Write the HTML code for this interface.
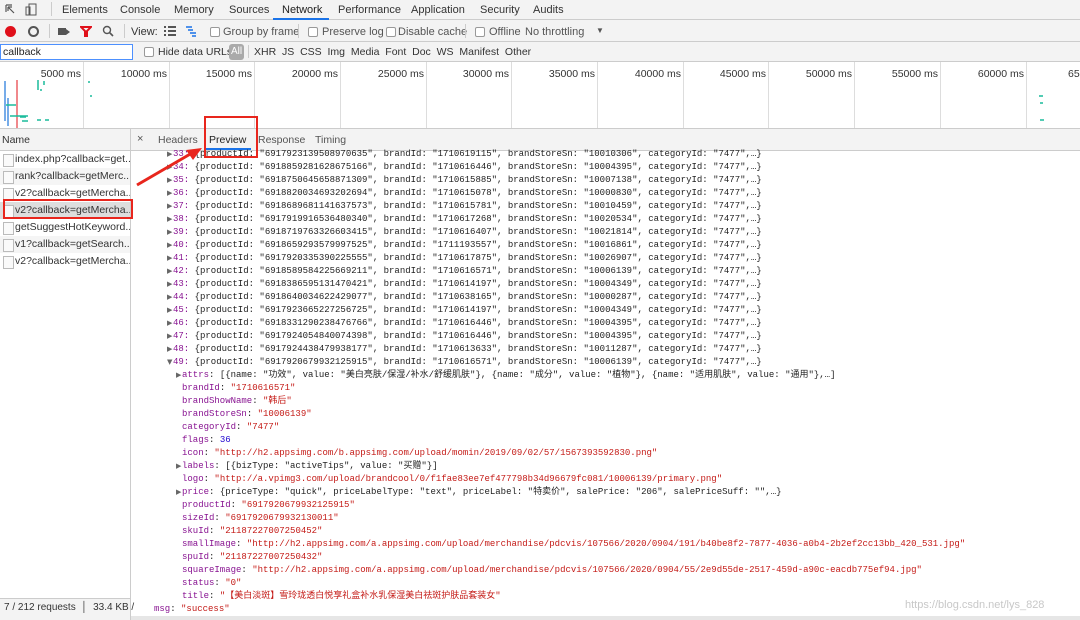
<!DOCTYPE html><html><head><meta charset="utf-8"><style>
*{margin:0;padding:0;box-sizing:border-box}
body{width:1080px;height:620px;overflow:hidden;background:#fff;font-family:"Liberation Sans","Noto Sans CJK SC",sans-serif;font-size:11px;color:#333;position:relative}
.a{position:absolute;white-space:nowrap}
.bar{position:absolute;left:0;width:1080px;background:#f3f3f3;border-bottom:1px solid #ccc}
.m{font-family:"Liberation Mono","Noto Sans CJK SC",monospace;font-size:9px;color:#222}
.m>div{height:13px;line-height:13px;white-space:nowrap;position:relative}
.k{color:#881391}.s{color:#c41a16}.n{color:#1c00cf}
.t{color:#666;font-size:7px;display:inline-block;width:6px;font-family:"DejaVu Sans",sans-serif}
.cb{position:absolute;width:10px;height:10px;border:1px solid #999;background:#fff;border-radius:2px}
.vl{position:absolute;top:62px;height:66px;width:1px;background:#ddd}
.tl{position:absolute;top:68px;font-size:10.5px;color:#333;text-align:right;width:80px}
.li{position:absolute;left:0;width:130px;height:17px;font-size:10.5px;padding-left:15px;line-height:17px;color:#333;white-space:nowrap;overflow:hidden}
.li:before{content:"";position:absolute;left:3px;top:3px;width:9px;height:11px;border:1px solid #bbb;background:#fafafa}
</style></head><body>
<div class="bar" style="top:0;height:20px"></div>
<div class="bar" style="top:20px;height:22px"></div>
<div class="bar" style="top:42px;height:20px"></div>
<div class="bar" style="top:128px;height:23px;border-top:1px solid #ccc"></div>
<svg class="a" style="left:4px;top:3px" width="40" height="14"><path d="M2 2h6M2 2v7M4 4l6 6M4 4h4M4 4v4" stroke="#555" fill="none" stroke-width="1.2"/><rect x="25" y="1" width="7" height="11" fill="none" stroke="#555"/><rect x="22" y="4" width="4" height="8" fill="none" stroke="#555"/></svg>
<div class="a" style="left:51px;top:2px;width:1px;height:14px;background:#ccc"></div>
<div class="a" style="left:62px;top:4px">Elements</div>
<div class="a" style="left:120px;top:4px">Console</div>
<div class="a" style="left:174px;top:4px">Memory</div>
<div class="a" style="left:229px;top:4px">Sources</div>
<div class="a" style="left:282px;top:4px;color:#222">Network</div>
<div class="a" style="left:273px;top:18px;width:56px;height:2px;background:#1a73e8"></div>
<div class="a" style="left:338px;top:4px">Performance</div>
<div class="a" style="left:411px;top:4px">Application</div>
<div class="a" style="left:480px;top:4px">Security</div>
<div class="a" style="left:533px;top:4px">Audits</div>
<div class="a" style="left:5px;top:26px;width:11px;height:11px;border-radius:50%;background:#e0101a"></div>
<div class="a" style="left:28px;top:26px;width:11px;height:11px;border-radius:50%;border:2px solid #555"></div>
<div class="a" style="left:49px;top:24px;width:1px;height:14px;background:#ccc"></div>
<div class="a" style="left:58px;top:28px;width:8px;height:7px;background:#555"></div><div class="a" style="left:66px;top:29px;border-left:4px solid #555;border-top:3px solid transparent;border-bottom:3px solid transparent"></div>
<svg class="a" style="left:80px;top:25px" width="12" height="12"><path d="M1 2h10L7 6v5H5V6z" fill="none" stroke="#e0101a" stroke-width="2"/></svg>
<svg class="a" style="left:102px;top:25px" width="12" height="12"><circle cx="5" cy="5" r="3.5" fill="none" stroke="#555" stroke-width="1.4"/><path d="M7.5 7.5L11 11" stroke="#555" stroke-width="1.6"/></svg>
<div class="a" style="left:124px;top:24px;width:1px;height:14px;background:#ccc"></div>
<div class="a" style="left:131px;top:26px">View:</div>
<svg class="a" style="left:164px;top:26px" width="40" height="11"><path d="M0 1h2M4 1h8M0 5h2M4 5h8M0 9h2M4 9h8" stroke="#555" stroke-width="2"/><path d="M22 1h6M24 4h5M26 7h6M28 10h4" stroke="#1a73e8" stroke-width="1.6"/></svg>
<div class="cb" style="left:210px;top:27px"></div><div class="a" style="left:223px;top:26px;color:#555">Group by frame</div>
<div class="a" style="left:298px;top:24px;width:1px;height:14px;background:#ccc"></div>
<div class="cb" style="left:308px;top:27px"></div><div class="a" style="left:322px;top:26px;color:#555">Preserve log</div>
<div class="cb" style="left:386px;top:27px"></div><div class="a" style="left:398px;top:26px;color:#555">Disable cache</div>
<div class="a" style="left:465px;top:24px;width:1px;height:14px;background:#ccc"></div>
<div class="cb" style="left:475px;top:27px"></div><div class="a" style="left:489px;top:26px;color:#555">Offline</div>
<div class="a" style="left:525px;top:26px;color:#555">No throttling</div>
<div class="a" style="left:596px;top:26px;font-size:8px;color:#555">▼</div>
<div class="a" style="left:0;top:44px;width:133px;height:16px;border:1px solid #4d90fe;background:#fff;padding-left:2px;line-height:14px;font-size:10.5px;color:#222">callback</div>
<div class="cb" style="left:144px;top:47px"></div><div class="a" style="left:158px;top:46px;font-size:10.5px">Hide data URLs</div>
<div class="a" style="left:229px;top:44px;width:15px;height:16px;background:#aaa;border-radius:3px;color:#fff;font-size:10px;text-align:center;line-height:16px">All</div>
<div class="a" style="left:248px;top:45px;width:1px;height:13px;background:#ccc"></div>
<div class="a" style="left:254px;top:46px;font-size:10.5px">XHR&nbsp;&nbsp;JS&nbsp;&nbsp;CSS&nbsp;&nbsp;Img&nbsp;&nbsp;Media&nbsp;&nbsp;Font&nbsp;&nbsp;Doc&nbsp;&nbsp;WS&nbsp;&nbsp;Manifest&nbsp;&nbsp;Other</div>
<div class="vl" style="left:83px"></div><div class="vl" style="left:169px"></div><div class="vl" style="left:254px"></div><div class="vl" style="left:340px"></div><div class="vl" style="left:426px"></div><div class="vl" style="left:511px"></div><div class="vl" style="left:597px"></div><div class="vl" style="left:683px"></div><div class="vl" style="left:768px"></div><div class="vl" style="left:854px"></div><div class="vl" style="left:940px"></div><div class="vl" style="left:1026px"></div>
<div class="tl" style="left:1px">5000 ms</div><div class="tl" style="left:87px">10000 ms</div><div class="tl" style="left:172px">15000 ms</div><div class="tl" style="left:258px">20000 ms</div><div class="tl" style="left:344px">25000 ms</div><div class="tl" style="left:429px">30000 ms</div><div class="tl" style="left:515px">35000 ms</div><div class="tl" style="left:601px">40000 ms</div><div class="tl" style="left:686px">45000 ms</div><div class="tl" style="left:772px">50000 ms</div><div class="tl" style="left:858px">55000 ms</div><div class="tl" style="left:944px">60000 ms</div><div class="a" style="left:1068px;top:68px;font-size:10.5px">65</div>
<svg class="a" style="left:0;top:78px" width="140" height="50"><path d="M17 2v48" stroke="#e0101a"/><path d="M5 3v40M8 20v28" stroke="#4a90e2" stroke-width="1.5"/><path d="M6 27h10M10 38h18M20 39h6M38 2v10M40 12h2M44 3v4M22 43h6M37 42h4M45 42h4M89 3v2M90 18h2" stroke="#1abc9c" stroke-width="1.5"/></svg>
<svg class="a" style="left:1036px;top:78px" width="20" height="50"><path d="M3 18h4M4 25h3M4 42h4" stroke="#1abc9c" stroke-width="1.5"/></svg>
<div class="a" style="left:130px;top:128px;width:1px;height:492px;background:#ccc"></div>
<div class="a" style="left:2px;top:134px;font-size:10.5px">Name</div>
<div class="li" style="top:151px">index.php?callback=get...</div>
<div class="li" style="top:168px;background:#f5f5f5">rank?callback=getMerc...</div>
<div class="li" style="top:185px">v2?callback=getMercha...</div>
<div class="li" style="top:202px;background:#ddd">v2?callback=getMercha...</div>
<div class="li" style="top:219px">getSuggestHotKeyword...</div>
<div class="li" style="top:236px;background:#f5f5f5">v1?callback=getSearch...</div>
<div class="li" style="top:253px">v2?callback=getMercha...</div>
<div class="a" style="left:3px;top:199px;width:130px;height:20px;border:2px solid #e8261d"></div>
<div class="a" style="left:0;top:598px;width:130px;height:22px;background:#f3f3f3;border-top:1px solid #ccc"></div>
<div class="a" style="left:4px;top:602px;font-size:10px;color:#333">7 / 212 requests &nbsp;│&nbsp; 33.4 KB /</div>
<div class="a" style="left:137px;top:133px;font-size:11px;color:#555">×</div>
<div class="a" style="left:158px;top:134px;font-size:10.5px;color:#555">Headers</div>
<div class="a" style="left:209px;top:134px;font-size:10.5px;color:#222">Preview</div>
<div class="a" style="left:206px;top:148px;width:45px;height:2px;background:#1a73e8"></div>
<div class="a" style="left:258px;top:134px;font-size:10.5px;color:#555">Response</div>
<div class="a" style="left:315px;top:134px;font-size:10.5px;color:#555">Timing</div>
<div class="m a" style="left:167px;top:148px">
<div><span class="t">▶</span><span class="k">33:</span> {productId: "6917923139508970635", brandId: "1710619115", brandStoreSn: "10010306", categoryId: "7477",…}</div>
<div><span class="t">▶</span><span class="k">34:</span> {productId: "6918859281628675166", brandId: "1710616446", brandStoreSn: "10004395", categoryId: "7477",…}</div>
<div><span class="t">▶</span><span class="k">35:</span> {productId: "6918750645658871309", brandId: "1710615885", brandStoreSn: "10007138", categoryId: "7477",…}</div>
<div><span class="t">▶</span><span class="k">36:</span> {productId: "6918820034693202694", brandId: "1710615078", brandStoreSn: "10000830", categoryId: "7477",…}</div>
<div><span class="t">▶</span><span class="k">37:</span> {productId: "6918689681141637573", brandId: "1710615781", brandStoreSn: "10010459", categoryId: "7477",…}</div>
<div><span class="t">▶</span><span class="k">38:</span> {productId: "6917919916536480340", brandId: "1710617268", brandStoreSn: "10020534", categoryId: "7477",…}</div>
<div><span class="t">▶</span><span class="k">39:</span> {productId: "6918719763326603415", brandId: "1710616407", brandStoreSn: "10021814", categoryId: "7477",…}</div>
<div><span class="t">▶</span><span class="k">40:</span> {productId: "6918659293579997525", brandId: "1711193557", brandStoreSn: "10016861", categoryId: "7477",…}</div>
<div><span class="t">▶</span><span class="k">41:</span> {productId: "6917920335390225555", brandId: "1710617875", brandStoreSn: "10026907", categoryId: "7477",…}</div>
<div><span class="t">▶</span><span class="k">42:</span> {productId: "6918589584225669211", brandId: "1710616571", brandStoreSn: "10006139", categoryId: "7477",…}</div>
<div><span class="t">▶</span><span class="k">43:</span> {productId: "6918386595131470421", brandId: "1710614197", brandStoreSn: "10004349", categoryId: "7477",…}</div>
<div><span class="t">▶</span><span class="k">44:</span> {productId: "6918640034622429077", brandId: "1710638165", brandStoreSn: "10000287", categoryId: "7477",…}</div>
<div><span class="t">▶</span><span class="k">45:</span> {productId: "6917923665227256725", brandId: "1710614197", brandStoreSn: "10004349", categoryId: "7477",…}</div>
<div><span class="t">▶</span><span class="k">46:</span> {productId: "6918331290238476766", brandId: "1710616446", brandStoreSn: "10004395", categoryId: "7477",…}</div>
<div><span class="t">▶</span><span class="k">47:</span> {productId: "6917924054840074398", brandId: "1710616446", brandStoreSn: "10004395", categoryId: "7477",…}</div>
<div><span class="t">▶</span><span class="k">48:</span> {productId: "6917924438479938177", brandId: "1710613633", brandStoreSn: "10011287", categoryId: "7477",…}</div>
<div><span class="t">▼</span><span class="k">49:</span> {productId: "6917920679932125915", brandId: "1710616571", brandStoreSn: "10006139", categoryId: "7477",…}</div>
<div style="padding-left:9px"><span class="t">▶</span><span class="k">attrs</span>: [{name: "功效", value: "美白亮肤/保湿/补水/舒缓肌肤"}, {name: "成分", value: "植物"}, {name: "适用肌肤", value: "通用"},…]</div>
<div style="padding-left:15px"><span class="k">brandId</span>: <span class="s">"1710616571"</span></div>
<div style="padding-left:15px"><span class="k">brandShowName</span>: <span class="s">"韩后"</span></div>
<div style="padding-left:15px"><span class="k">brandStoreSn</span>: <span class="s">"10006139"</span></div>
<div style="padding-left:15px"><span class="k">categoryId</span>: <span class="s">"7477"</span></div>
<div style="padding-left:15px"><span class="k">flags</span>: <span class="n">36</span></div>
<div style="padding-left:15px"><span class="k">icon</span>: <span class="s">"http://h2.appsimg.com/b.appsimg.com/upload/momin/2019/09/02/57/1567393592830.png"</span></div>
<div style="padding-left:9px"><span class="t">▶</span><span class="k">labels</span>: [{bizType: "activeTips", value: "买赠"}]</div>
<div style="padding-left:15px"><span class="k">logo</span>: <span class="s">"http://a.vpimg3.com/upload/brandcool/0/f1fae83ee7ef477798b34d96679fc081/10006139/primary.png"</span></div>
<div style="padding-left:9px"><span class="t">▶</span><span class="k">price</span>: {priceType: "quick", priceLabelType: "text", priceLabel: "特卖价", salePrice: "206", salePriceSuff: "",…}</div>
<div style="padding-left:15px"><span class="k">productId</span>: <span class="s">"6917920679932125915"</span></div>
<div style="padding-left:15px"><span class="k">sizeId</span>: <span class="s">"6917920679932130011"</span></div>
<div style="padding-left:15px"><span class="k">skuId</span>: <span class="s">"21187227007250452"</span></div>
<div style="padding-left:15px"><span class="k">smallImage</span>: <span class="s">"http://h2.appsimg.com/a.appsimg.com/upload/merchandise/pdcvis/107566/2020/0904/191/b40be8f2-7877-4036-a0b4-2b2ef2cc13bb_420_531.jpg"</span></div>
<div style="padding-left:15px"><span class="k">spuId</span>: <span class="s">"21187227007250432"</span></div>
<div style="padding-left:15px"><span class="k">squareImage</span>: <span class="s">"http://h2.appsimg.com/a.appsimg.com/upload/merchandise/pdcvis/107566/2020/0904/55/2e9d55de-2517-459d-a90c-eacdb775ef94.jpg"</span></div>
<div style="padding-left:15px"><span class="k">status</span>: <span class="s">"0"</span></div>
<div style="padding-left:15px"><span class="k">title</span>: <span class="s">"【美白淡斑】雪玲珑透白悦享礼盒补水乳保湿美白祛斑护肤品套装女"</span></div>
<div style="margin-left:-13px"><span class="k">msg</span>: <span class="s">"success"</span></div>
</div>
<div class="a" style="left:204px;top:116px;width:54px;height:42px;border:2px solid #e8261d"></div>
<svg class="a" style="left:130px;top:140px" width="80" height="50"><path d="M7 45L62 13" stroke="#e8261d" stroke-width="3"/><path d="M72 8L56 10L63 20z" fill="#e8261d"/></svg>
<div class="a" style="left:131px;top:616px;width:949px;height:4px;background:#e6e6e6"></div>
<div class="a" style="left:905px;top:599px;font-size:11px;color:#c8c8c8">https://blog.csdn.net/lys_828</div>
</body></html>
